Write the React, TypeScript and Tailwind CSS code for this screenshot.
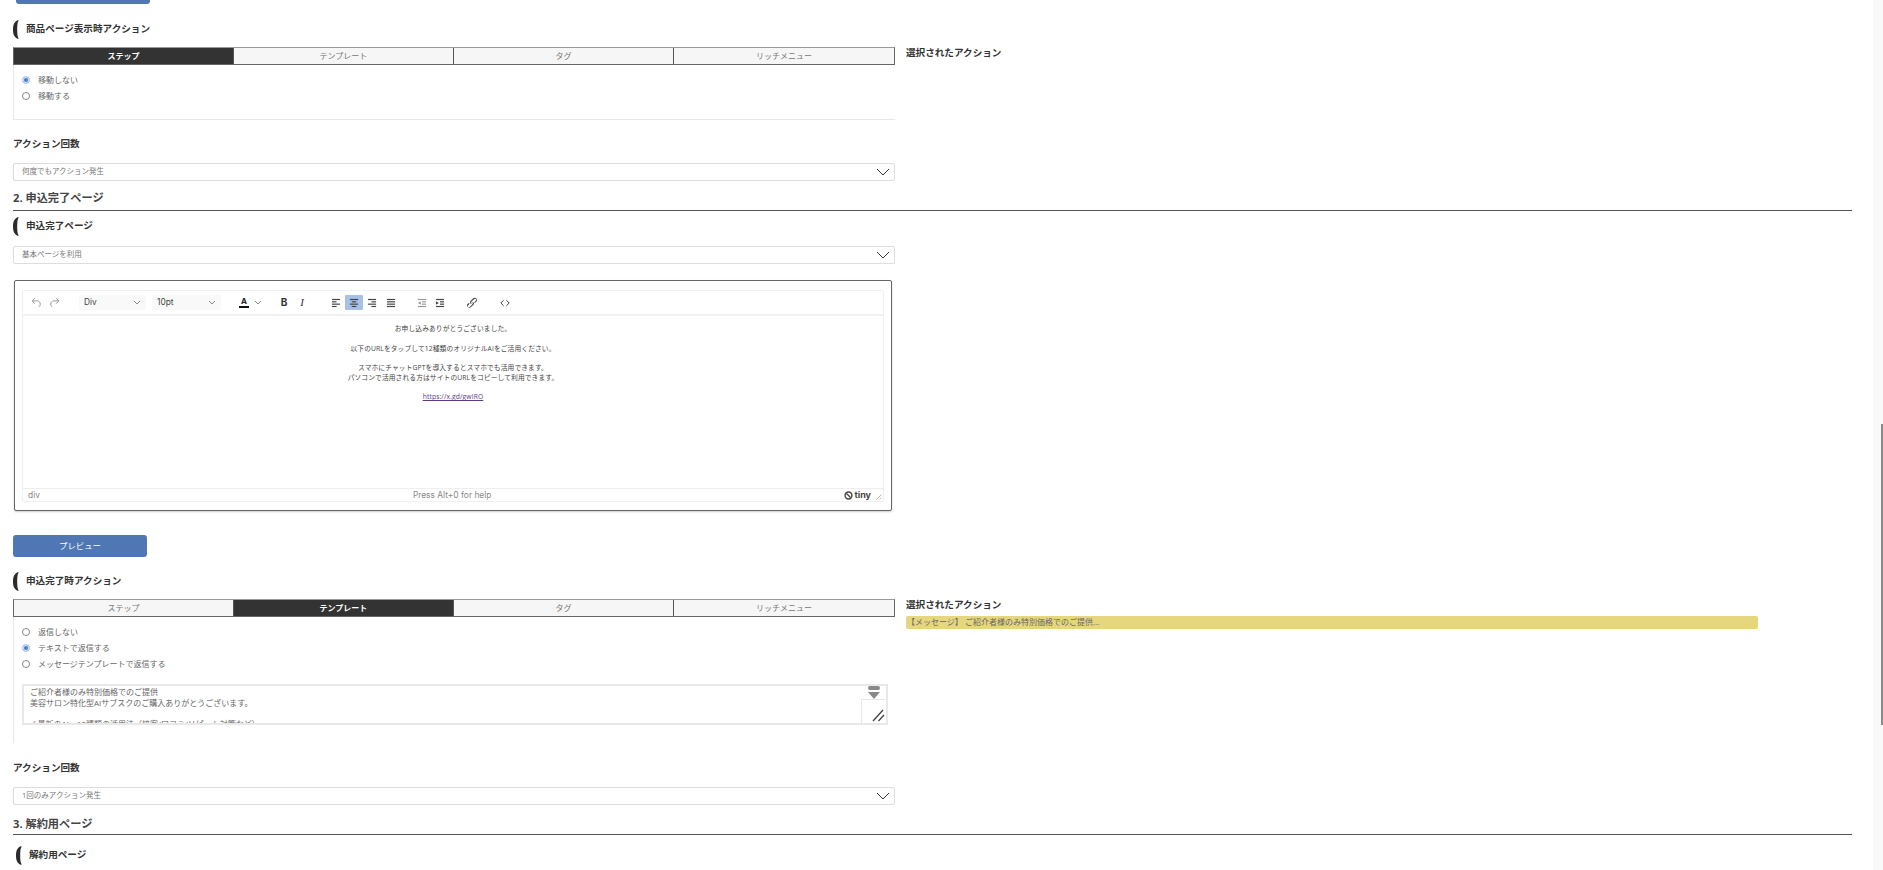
import React from "react";
import { Code } from "lucide-react";

const FONT = "font-['Open_Sans','Noto_Sans_CJK_JP',sans-serif]";
const TABS = ["ステップ", "テンプレート", "タグ", "リッチメニュー"];

function Bracket() {
  return (
    <svg width="6" height="19" viewBox="0 0 6 19" className="shrink-0">
      <path d="M5.4 0 C1.6 1 0 4.5 0 9.5 C0 14.5 1.6 18 5.4 19 L5.4 18 C4.4 16.5 4.2 13 4.2 9.5 C4.2 6 4.4 2.5 5.4 1 Z" fill="#2b2b2b" />
    </svg>
  );
}

function Heading({ text, className = "" }: { text: string; className?: string }) {
  return (
    <div className={`flex items-center h-[18px] gap-[7px] ${className}`}>
      <Bracket />
      <span className="text-[9.6px] font-bold text-[#333]">{text}</span>
    </div>
  );
}

function Tabs({ active, className = "" }: { active: number; className?: string }) {
  return (
    <div className={`grid grid-cols-4 h-[18px] border border-[#666] border-t-[#999] ${className}`}>
      {TABS.map((t, i) => (
        <div
          key={t}
          className={`flex items-center justify-center text-[8px] ${i < 3 ? "border-r border-[#555]" : ""} ${
            i === active ? "bg-[#333] text-white font-bold" : "bg-[#f6f6f6] text-[#777]"
          }`}
        >
          {t}
        </div>
      ))}
    </div>
  );
}

function Radio({ label, checked }: { label: string; checked?: boolean }) {
  return (
    <div className="flex items-center h-[16px] pl-[8px] gap-[8px] text-[8px] text-[#666]">
      {checked ? (
        <span className="w-[8px] h-[8px] rounded-full border border-[#bcd0ef] bg-[#4f78c8] ring-1 ring-inset ring-[#dfe8f8]" />
      ) : (
        <span className="w-[8px] h-[8px] rounded-full border border-[#888] bg-white" />
      )}
      <span>{label}</span>
    </div>
  );
}

function Select({ value, className = "" }: { value: string; className?: string }) {
  return (
    <div className={`flex items-center justify-between h-[18px] w-[882px] pl-[8px] pr-[4px] border border-[#ddd] rounded-[2px] bg-white text-[7.5px] text-[#777] ${className}`}>
      <span>{value}</span>
      <svg width="14" height="8" viewBox="0 0 14 8">
        <path d="M1 1 L7 7 L13 1" fill="none" stroke="#333" strokeWidth="1" />
      </svg>
    </div>
  );
}

function SectionTitle({ text, className = "" }: { text: string; className?: string }) {
  return <h2 className={`text-[11.2px] leading-[16px] font-bold text-[#444] border-b border-[#555] ${className}`}>{text}</h2>;
}

function Label({ className = "" }: { className?: string }) {
  return <div className={`text-[9.6px] leading-[14px] font-bold text-[#333] ${className}`}>アクション回数</div>;
}

function ActionLabel() {
  return <div className="text-[9.6px] leading-[12px] font-bold text-[#333]">選択されたアクション</div>;
}

// tinymce style toolbar icons
function Lines({ rows }: { rows: number[][] }) {
  return (
    <svg width="14" height="14" viewBox="0 0 24 24" fill="#444">
      {rows.map(([x, w], i) => (
        <rect key={i} x={x} y={5 + i * 4} width={w} height="2" />
      ))}
    </svg>
  );
}

function Indent({ out }: { out?: boolean }) {
  return (
    <svg width="14" height="14" viewBox="0 0 24 24" fill={out ? "#999" : "#444"}>
      <rect x="5" y="5" width="14" height="2" />
      <rect x="12" y="9" width="7" height="2" />
      <rect x="12" y="13" width="7" height="2" />
      <rect x="5" y="17" width="14" height="2" />
      <path d={out ? "M10 9 L5 12 L10 15 Z" : "M5 9 L10 12 L5 15 Z"} />
    </svg>
  );
}

function Caret() {
  return (
    <svg width="8" height="5" viewBox="0 0 8 5">
      <path d="M1 1 L4 4 L7 1" fill="none" stroke="#888" strokeWidth="1" />
    </svg>
  );
}

function Toolbar() {
  return (
    <div className="flex items-center h-[25px] shrink-0 border-b-2 border-[#f2f2f2] pl-[7px] text-[#333]">
      <svg width="13" height="13" viewBox="0 0 24 24" fill="none" stroke="#999" strokeWidth="1.8">
        <path d="M9 4 L4 9 L9 14 M4 9 H13 C17 9 19 12 19 15 C19 17 18 19 16.5 20" />
      </svg>
      <svg width="13" height="13" viewBox="0 0 24 24" fill="none" stroke="#999" strokeWidth="1.8" className="ml-[5px]">
        <path d="M15 4 L20 9 L15 14 M20 9 H11 C7 9 5 12 5 15 C5 17 6 19 7.5 20" />
      </svg>
      <div className="flex items-center justify-between w-[67px] h-[15px] ml-[18px] px-[5px] bg-[#f9f9f9] text-[8.4px] font-['Inter',sans-serif] text-[#444]">
        <span>Div</span>
        <Caret />
      </div>
      <div className="flex items-center justify-between w-[69px] h-[15px] ml-[6px] px-[5px] bg-[#f9f9f9] text-[8.4px] font-['Inter',sans-serif] text-[#444]">
        <span>10pt</span>
        <Caret />
      </div>
      <div className="ml-[18px] w-[10px] text-center text-[8px] leading-[9px] font-bold font-['Inter',sans-serif] border-b-2 border-[#111] text-[#222]">A</div>
      <div className="ml-[5px]">
        <Caret />
      </div>
      <div className="ml-[17px] w-[10px] text-center text-[10px] font-bold font-['Inter',sans-serif] text-[#333]">B</div>
      <div className="ml-[8px] w-[10px] text-center text-[11px] italic font-['Liberation_Serif',serif] text-[#333]">I</div>
      <div className="flex items-center ml-[22px]">
        <span className="w-[14px] flex justify-center"><Lines rows={[[5, 14], [5, 8], [5, 14], [5, 8]]} /></span>
        <span className="w-[18px] h-[15px] ml-[2px] flex items-center justify-center rounded-[1px] bg-[#a6c2ea]"><Lines rows={[[5, 14], [8, 8], [5, 14], [8, 8]]} /></span>
        <span className="w-[14px] ml-[2px] flex justify-center"><Lines rows={[[5, 14], [11, 8], [5, 14], [11, 8]]} /></span>
        <span className="w-[14px] ml-[5px] flex justify-center"><Lines rows={[[5, 14], [5, 14], [5, 14], [5, 14]]} /></span>
      </div>
      <div className="flex items-center ml-[17px] gap-[4px]">
        <Indent out />
        <Indent />
      </div>
      <svg width="14" height="14" viewBox="0 0 24 24" fill="#444" className="ml-[18px]">
        <path d="M6.2 12.3a1 1 0 0 1 1.4 1.4l-2 2a2 2 0 1 0 2.8 2.8l4.8-4.8a1 1 0 0 0 0-1.4 1 1 0 1 1 1.4-1.3 2.9 2.9 0 0 1 0 4L9.8 19.4a4 4 0 0 1-5.6-5.6l2-1.5Zm11.6-.6a1 1 0 0 1-1.4-1.4l2-2a2 2 0 1 0-2.8-2.8L10.8 10a1 1 0 0 0 0 1.4 1 1 0 1 1-1.4 1.3 2.9 2.9 0 0 1 0-4l4.8-4.9a4 4 0 0 1 5.6 5.6l-2 1.3Z" />
      </svg>
      <Code size={10} strokeWidth={2.2} className="ml-[21px] text-[#333]" />
    </div>
  );
}

function Editor() {
  return (
    <div className="mt-[16px] w-[878px] ml-[1px] h-[231px] border border-[#666] rounded-[2px] shadow-[0_1px_2px_rgba(0,0,0,0.2)] pt-[9px] px-[7px] pb-[8px] bg-white">
      <div className="flex flex-col h-full border border-[#f0f0f0] rounded-[2px]">
        <Toolbar />
        <div className="flex-1 pt-[8px] text-center text-[6.75px] leading-[9.6px] tracking-[0.1px] text-[#444]">
          <p className="mb-[10px]">お申し込みありがとうございました。</p>
          <p className="mb-[10px]">以下のURLをタップして12種類のオリジナルAIをご活用ください。</p>
          <p className="mb-[10px]">
            スマホにチャットGPTを導入するとスマホでも活用できます。
            <br />
            パソコンで活用される方はサイトのURLをコピーして利用できます。
          </p>
          <p>
            <a className="underline text-[#5b3a8c]">https://x.gd/gwIRO</a>
          </p>
        </div>
        <div className="flex items-center justify-between h-[13px] shrink-0 border-t border-[#eee] pl-[5px] pr-[1px] text-[8.4px] text-[#888] font-['Inter',sans-serif]">
          <span>div</span>
          <span className="ml-[20px]">Press Alt+0 for help</span>
          <div className="flex items-center gap-[1px]">
            <svg width="9" height="9" viewBox="0 0 10 10">
              <circle cx="5" cy="5" r="3.8" fill="none" stroke="#444" strokeWidth="1.6" />
              <path d="M2.8 2.8 L7.2 7.2" stroke="#444" strokeWidth="1.4" />
            </svg>
            <span className="text-[9px] font-bold text-[#444]">tiny</span>
            <svg width="6" height="6" viewBox="0 0 6 6" className="ml-[4px] mt-[3px]">
              <path d="M0.5 5.5 L5.5 0.5 M3.5 5.5 L5.5 3.5" stroke="#aaa" strokeWidth="0.8" />
            </svg>
          </div>
        </div>
      </div>
    </div>
  );
}

function MessageBox() {
  return (
    <div className="relative mt-[12px] ml-[8px] w-[866px] h-[41px] border-2 border-[#e8e8e8] overflow-hidden bg-white">
      <div className="pl-[6px] pt-[1px] text-[8px] leading-[10.6px] text-[#666]">
        ご紹介者様のみ特別価格でのご提供
        <br />
        美容サロン特化型AIサブスクのご購入ありがとうございます。
        <br />
        <br />
        ✓ 最新のAI、12種類の活用法（接客/口コミ/リピート対策など）
      </div>
      {/* scroll arrow and resize handle sitting on the textarea */}
      <div className="absolute right-[6px] top-[0px] w-[12px] h-[4px] rounded-full bg-[#888]" />
      <div className="absolute right-[6px] top-[6px] w-0 h-0 border-x-[6px] border-x-transparent border-t-[7px] border-t-[#888]" />
      <div className="absolute right-0 bottom-0 w-[25px] h-[24px] border-l border-t border-[#e8e8e8] bg-white">
        <svg width="13" height="13" viewBox="0 0 13 13" className="absolute right-[1px] bottom-[1px]">
          <path d="M1 12 L11 1 M6.5 12 L12 6" stroke="#444" strokeWidth="1.3" />
        </svg>
      </div>
    </div>
  );
}

export default function App() {
  return (
    <div className={`flex h-[870px] overflow-hidden bg-white ${FONT}`}>
      <main className="flex-1 min-w-0 pl-[13px] pr-[21px] -mt-[18px]">
        <button className="block w-[134px] h-[22px] ml-[3px] rounded-[3px] bg-[#4f77b3]" />

        <Heading text="商品ページ表示時アクション" className="mt-[16px]" />
        <div className="flex gap-[11px] mt-[9px]">
          <div className="w-[882px]">
            <Tabs active={0} />
            <div className="h-[55px] pt-[7px] border-l border-b border-[#e8e8e8]">
              <Radio label="移動しない" checked />
              <Radio label="移動する" />
            </div>
          </div>
          <ActionLabel />
        </div>

        <Label className="mt-[17px]" />
        <Select value="何度でもアクション発生" className="mt-[12px]" />

        <SectionTitle text="2. 申込完了ページ" className="mt-[9px] pb-[4px]" />
        <Heading text="申込完了ページ" className="mt-[6px]" />
        <Select value="基本ページを利用" className="mt-[11px]" />

        <Editor />

        <button className="block w-[134px] h-[22px] mt-[24px] rounded-[3px] bg-[#4f77b3] text-white text-[8.4px]">プレビュー</button>

        <Heading text="申込完了時アクション" className="mt-[15px]" />
        <div className="flex gap-[11px] mt-[9px]">
          <div className="w-[882px]">
            <Tabs active={1} />
            <div className="h-[126px] pt-[7px] border-l border-[#e8e8e8]">
              <Radio label="返信しない" />
              <Radio label="テキストで返信する" checked />
              <Radio label="メッセージテンプレートで返信する" />
              <MessageBox />
            </div>
          </div>
          <div className="w-[852px]">
            <ActionLabel />
            <div className="mt-[5px] h-[13px] overflow-hidden rounded-[2px] bg-[#e6d67e] px-[1px] text-[8px] leading-[11px] text-[#666]">
              【メッセージ】 ご紹介者様のみ特別価格でのご提供…
              <br />
              美容サロン特化型AIサブスクのご購入ありがとうございます。
            </div>
          </div>
        </div>

        <Label className="mt-[18px]" />
        <Select value="1回のみアクション発生" className="mt-[12px]" />

        <SectionTitle text="3. 解約用ページ" className="mt-[11px] pb-[2px]" />
        <Heading text="解約用ページ" className="mt-[11px] ml-[3px]" />
      </main>

      {/* page scrollbar */}
      <div className="w-[10px] shrink-0 bg-[#f9f9f9] flex justify-end pt-[424px]">
        <div className="w-[2px] h-[301px] bg-[#8a8a8a]" />
      </div>
    </div>
  );
}
